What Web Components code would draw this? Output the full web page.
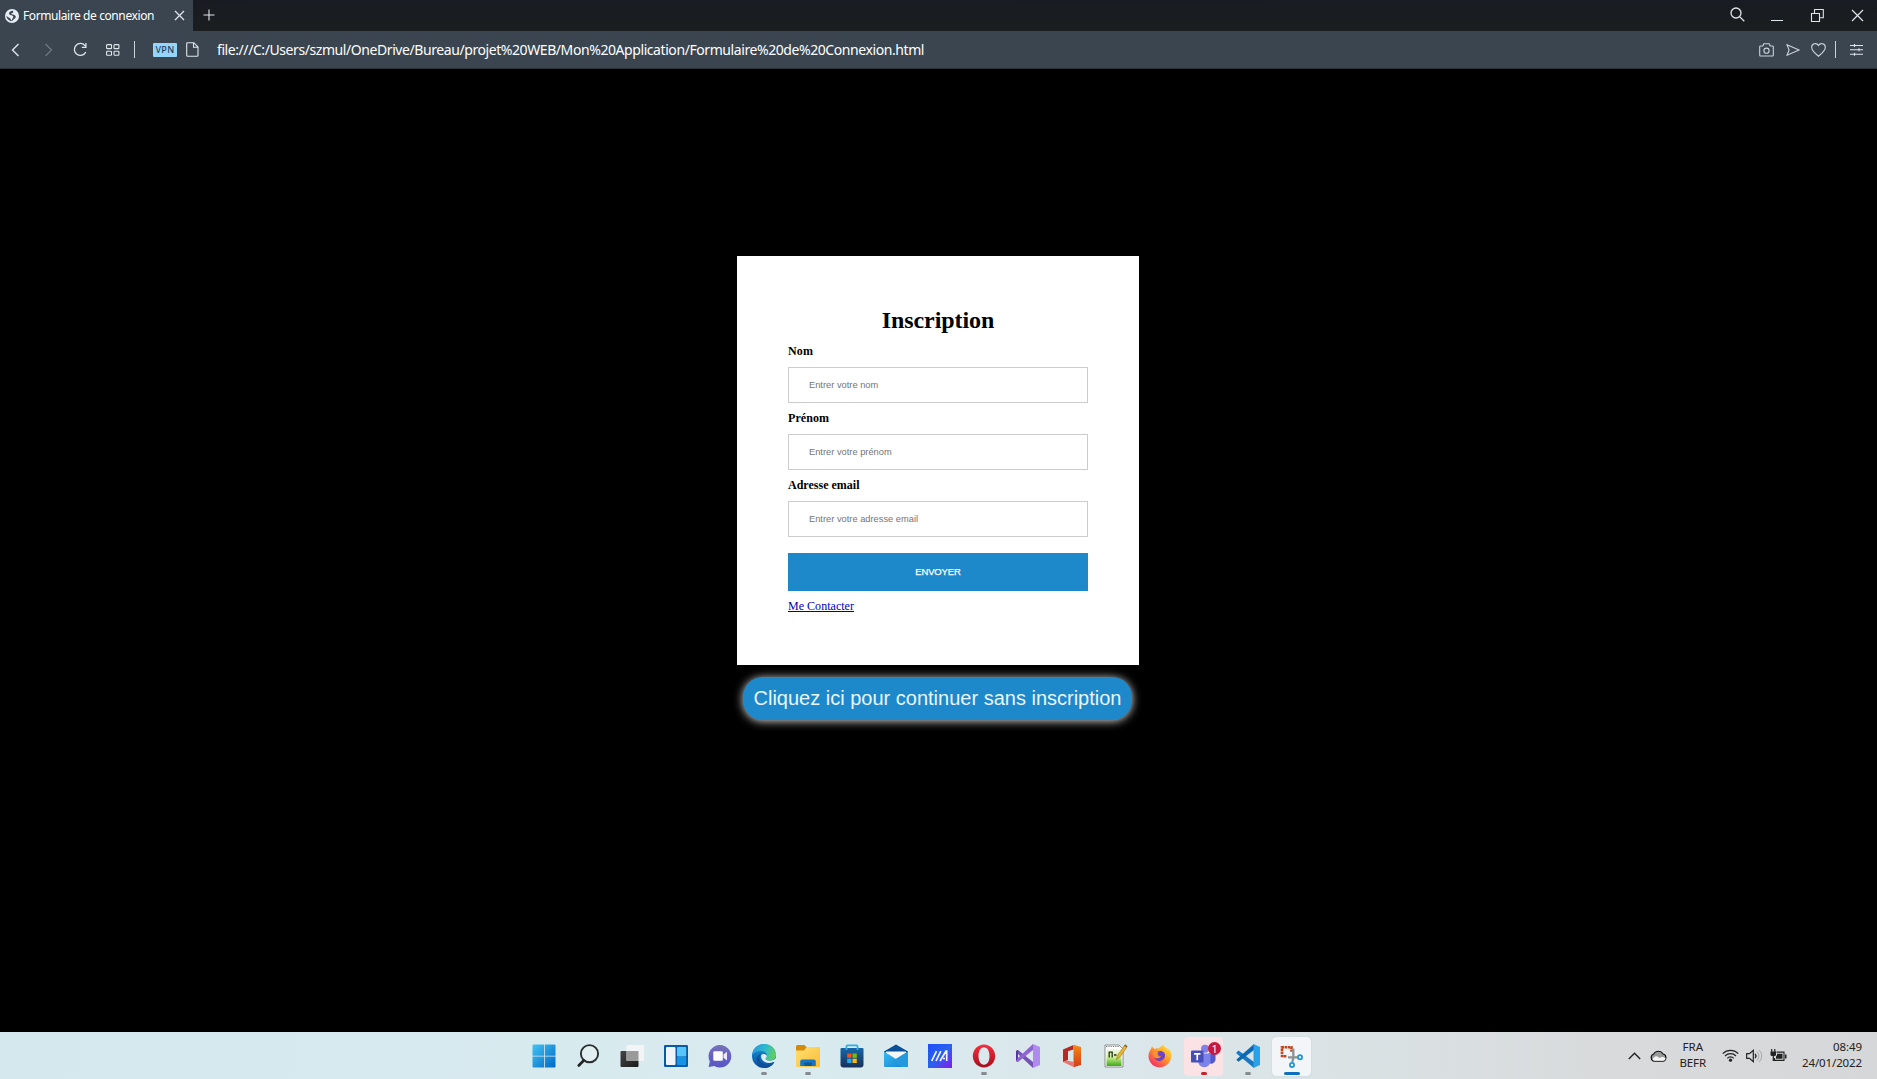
<!DOCTYPE html>
<html lang="fr">
<head>
<meta charset="utf-8">
<title>Formulaire de connexion</title>
<style>
html,body{margin:0;height:100%;overflow:hidden;background:#000}
</style>
</head>
<body>
<desktop-screen></desktop-screen>
<script>
const define = (name, html, ready) => customElements.define(name, class extends HTMLElement {
  constructor(){ super(); this.attachShadow({mode:'open'}); }
  connectedCallback(){
    this.shadowRoot.innerHTML = typeof html === 'function' ? html(this) : html;
    if (ready) ready(this);
  }
});

/* Text run tracked so that it occupies exactly the given width. */
define('fit-text', `<style>:host{display:inline-block;white-space:pre;flex:none}span{display:inline-block}:host([underline]) span{text-decoration:underline}</style><span><slot></slot></span>`, el => {
  const span = el.shadowRoot.querySelector('span');
  const want = parseFloat(el.getAttribute('width'));
  const n = el.textContent.length;
  const got = span.getBoundingClientRect().width;
  if (got && want) { span.style.letterSpacing = ((want - got) / n) + 'px'; }
});

const L = 'fill="none" stroke="#dfe6eb"';
const ICONS = {
  globe:`<svg width="14" height="14" viewBox="0 0 14 14"><circle cx="7" cy="7" r="7" fill="#e8eef4"/><path d="M8.200 1.800C6 1.500 3.800 3 4 4.800c.3 1.500 2.400 1.300 3.600 1.900 1 .6.900 1.500.1 2.300l-1 2.500C5.800 11 5.800 10 5 9.300 4 8.500 2.500 8 1.300 6.800c.3 2.500 2 4.700 4.700 5.400l1.700-.7C8.800 10 10.500 9.500 10.800 8c.1-1.200-1-1.700-2-2.200C8 5.300 7 5.500 6.200 4.700c.3-.9 1.700-.6 2-1.300z" fill="#3a4550"/></svg>`,
  close:`<svg width="11" height="11" viewBox="0 0 11 11"><path d="M1 1l9 9M10 1l-9 9" ${L} stroke-width="1.300"/></svg>`,
  plus:`<svg width="12" height="12" viewBox="0 0 12 12"><path d="M6 .5v11M.5 6h11" ${L} stroke-width="1.100"/></svg>`,
  back:`<svg width="9" height="14" viewBox="0 0 9 14"><path d="M7.500 1L1.500 7l6 6" ${L} stroke-width="1.400"/></svg>`,
  next:`<svg width="9" height="14" viewBox="0 0 9 14"><path d="M1.500 1l6 6-6 6" fill="none" stroke="#6b7680" stroke-width="1.400"/></svg>`,
  reload:`<svg width="15" height="15" viewBox="0 0 15 15"><path d="M12.300 4A6 6 0 1 0 12.800 10M12.900 1v4.300H8.800" ${L} stroke-width="1.300"/></svg>`,
  grid:`<svg width="14" height="12" viewBox="0 0 14 12"><g ${L} stroke-width="1.100"><rect x=".6" y=".6" width="4.900" height="4" rx=".7"/><rect x="8" y=".6" width="4.900" height="4" rx=".7"/><rect x=".6" y="7.200" width="4.900" height="4" rx=".7"/><rect x="8" y="7.200" width="4.900" height="4" rx=".7"/></g></svg>`,
  file:`<svg width="13" height="15" viewBox="0 0 13 15"><path d="M1.700.7h6.100L12 5v8.200a1 1 0 0 1-1 1H1.700a1 1 0 0 1-1-1V1.700a1 1 0 0 1 1-1zM7.500.9v4.400h4.400" ${L} stroke-width="1.100"/></svg>`,
  find:`<svg width="15" height="15" viewBox="0 0 15 15"><circle cx="6" cy="6" r="5" ${L} stroke-width="1.300"/><path d="M9.600 9.600l4.700 4.700" ${L} stroke-width="1.300"/></svg>`,
  min:`<svg width="12" height="12" viewBox="0 0 12 12"><path d="M0 11.500h12" ${L}/></svg>`,
  restore:`<svg width="13" height="13" viewBox="0 0 13 13"><path d="M.5 4.500h8v8h-8zM3.500 4V.5h8.800v8.300H9" ${L} stroke-width="1.100"/></svg>`,
  winclose:`<svg width="13" height="13" viewBox="0 0 13 13"><path d="M1 1l11 11M12 1L1 12" ${L} stroke-width="1.200"/></svg>`,
  camera:`<svg width="15" height="14" viewBox="0 0 15 14"><g fill="none" stroke="#cbd3da" stroke-width="1.100"><path d="M1.500 3h2.300l1-2.300h5.400l1 2.300h2.300a.8.8 0 0 1 .8.800v8.400a.8.8 0 0 1-.8.800h-12a.8.8 0 0 1-.8-.8V3.800a.8.8 0 0 1 .8-.8z"/><circle cx="7.500" cy="7.700" r="2.600"/></g></svg>`,
  send:`<svg width="14" height="12" viewBox="0 0 14 12"><path d="M1 .8L13 6 1 11.300 3.100 6z" fill="none" stroke="#cbd3da" stroke-width="1.100"/></svg>`,
  heart:`<svg width="15" height="14" viewBox="0 0 15 14"><path d="M7.500 13.200C3.500 10 .7 7.500.7 4.500A3.600 3.600 0 0 1 7.500 2.600 3.600 3.600 0 0 1 14.300 4.500c0 3-2.800 5.500-6.800 8.700z" fill="none" stroke="#cbd3da" stroke-width="1.100"/></svg>`,
  sliders:`<svg width="13" height="12" viewBox="0 0 13 12"><path d="M0 1.500h13M0 5.800h13M0 10.200h13M4.500 0v3M9 4.300v3M4.500 8.700v3" ${L} stroke-width="1.100"/></svg>`,

  start:`<svg width="24" height="24" viewBox="0 0 24 24"><defs><linearGradient id="g" x1="0" y1="0" x2="24" y2="24" gradientUnits="userSpaceOnUse"><stop stop-color="#43c6f5"/><stop offset="1" stop-color="#0066c5"/></linearGradient></defs><path d="M1.500.5H12v11.300H.5V1.500a1 1 0 0 1 1-1zM12.800.5h9.700a1 1 0 0 1 1 1v10.300H12.800zM.5 12.500H12v11H1.500a1 1 0 0 1-1-1zM12.800 12.500h10.700v10a1 1 0 0 1-1 1h-9.700z" fill="url(#g)"/></svg>`,
  search:`<svg width="24" height="24" viewBox="0 0 24 24"><circle cx="13.500" cy="9.700" r="8.600" fill="#e1eff3" stroke="#2a2c2e" stroke-width="1.900"/><path d="M7.800 16.400l-5 5.100" stroke="#222" stroke-width="2.700" stroke-linecap="round"/></svg>`,
  task:`<svg width="24" height="24" viewBox="0 0 24 24"><defs><linearGradient id="g" x1="0" y1="0" x2="1" y2="1"><stop stop-color="#444"/><stop offset="1" stop-color="#1b1b1b"/></linearGradient></defs><rect x=".5" y="7" width="18" height="16" rx="1" fill="url(#g)"/><rect x="6.500" y="1" width="17.500" height="16" rx="1" fill="#f4f4f4" opacity=".95"/><path d="M6.500 7h12v10h-12z" fill="#9a9a9a"/></svg>`,
  widgets:`<svg width="24" height="24" viewBox="0 0 24 24"><rect x="0" y="1" width="24" height="22" rx="1.300" fill="#075aa5"/><rect x="2" y="3" width="9.500" height="18" rx="1" fill="#f0f3f7"/><rect x="13" y="3" width="9.200" height="9.500" rx=".8" fill="#57c5f8"/><rect x="13" y="13" width="9.200" height="8" rx=".8" fill="#1594e3"/></svg>`,
  chat:`<svg width="24" height="24" viewBox="0 0 24 24"><defs><linearGradient id="g" x1="0" y1="0" x2="0" y2="1"><stop stop-color="#7572bb"/><stop offset="1" stop-color="#5854c7"/></linearGradient></defs><path d="M12 1a11.300 11.300 0 1 1-5.800 21L.6 23l1.200-5.500A11.300 11.300 0 0 1 12 1z" fill="url(#g)"/><rect x="5.300" y="7.300" width="9.500" height="9.500" rx="1.300" fill="#fff"/><path d="M15.500 10.500L19 7.800v8.700l-3.500-2.800z" fill="#eee9ff"/></svg>`,
  edge:`<svg width="24" height="24" viewBox="0 0 24 24"><defs><linearGradient id="g" x1="2" y1="3" x2="23" y2="10" gradientUnits="userSpaceOnUse"><stop stop-color="#279bdc"/><stop offset=".55" stop-color="#30bdc8"/><stop offset="1" stop-color="#62d05a"/></linearGradient><linearGradient id="h" x1="0" y1="0" x2="0" y2="1"><stop stop-color="#1995db"/><stop offset="1" stop-color="#0b4e9b"/></linearGradient></defs><circle cx="12" cy="12" r="12" fill="url(#h)"/><path d="M.1 11C.8 4.500 5.800 0 12 0c7 0 12 4.800 12 10.600 0 4-3 6.200-6.200 6.200-2.900 0-4.200-1.100-4.200-2 0-.8 1.300-1.300 1.300-3.100 0-2.700-2.500-4.700-5.900-4.700C5.200 7 2 8.500.1 11z" fill="url(#g)"/><path d="M8.700 9.800C5 15.700 10 22 17 20.800c2-.4 4-1.500 5.300-2.800C20.300 22 16.300 24 12.200 24 7 23 3.600 18.600 5 14c.6-2 2-3.500 3.700-4.200z" fill="#104f9a"/><path d="M9.300 11c-1.200 4 3 8.200 7.800 8 2.800-.1 4.500-1.200 5.500-1.200.7 0 .7.700.2 1.300 1-2 1.500-3.500 1.100-5-1.500 2-3.600 2.700-6.100 2.700-2.900 0-4.200-1.100-4.200-2 0-.8 1.300-1.300 1.300-3.100-2-2-4-2-5.600-.7z" fill="#dceef2"/></svg>`,
  folder:`<svg width="24" height="24" viewBox="0 0 24 24"><defs><linearGradient id="g" x1="0" y1="0" x2="1" y2="1"><stop stop-color="#ffdf72"/><stop offset="1" stop-color="#fbbd35"/></linearGradient></defs><path d="M1.500 1h6.800l2.200 2H23v5H0V2.500A1.500 1.500 0 0 1 1.500 1z" fill="#d48b0b"/><path d="M0 6.500h8L10.700 3H23a1 1 0 0 1 1 1v18a1 1 0 0 1-1 1H1a1 1 0 0 1-1-1z" fill="url(#g)"/><path d="M4.200 22v-4.500a2 2 0 0 1 2-2h11.600a2 2 0 0 1 2 2V22z" fill="#1676c4"/><path d="M8.300 18.500h7.500V22H8.300z" fill="#105895"/></svg>`,
  store:`<svg width="24" height="24" viewBox="0 0 24 24"><defs><linearGradient id="g" x1="0" y1="0" x2="0" y2="1"><stop stop-color="#1767a7"/><stop offset="1" stop-color="#17305a"/></linearGradient></defs><path d="M.5 5q0-1 1-1h21q1 0 1 1v15.500q0 3-3 3h-17q-3 0-3-3z" fill="url(#g)"/><path d="M6.500 6V2.500a1 1 0 0 1 1-1h9a1 1 0 0 1 1 1V6" fill="none" stroke="#2dafe3" stroke-width="1.900"/><path d="M7.500 4h9V2.500h-9z" fill="#d9ebf0"/><path d="M7.200 9.500h4.300v4.300H7.200z" fill="#f25022"/><path d="M12.500 9.500h4.300v4.300h-4.300z" fill="#7fba00"/><path d="M7.200 14.700h4.300V19H7.200z" fill="#28a8ea"/><path d="M12.500 14.700h4.300V19h-4.300z" fill="#ffb900"/></svg>`,
  mail:`<svg width="24" height="24" viewBox="0 0 24 24"><defs><linearGradient id="g" x1="0" y1="0" x2="1" y2="1"><stop stop-color="#38baf0"/><stop offset="1" stop-color="#1583d4"/></linearGradient></defs><path d="M0 7.500L12 .5l12 7v5H0z" fill="#0b4f98"/><path d="M2 8h20v8H2z" fill="#f5f7f8"/><path d="M0 7.500l12 7.500 12-7.500V22a1 1 0 0 1-1 1H1a1 1 0 0 1-1-1z" fill="url(#g)"/><path d="M24 7.500L8.500 17 18 23h5a1 1 0 0 0 1-1z" fill="#2499dd"/><path d="M2 7.500h20L12 14z" fill="#f5f7f8"/></svg>`,
  armoury:`<svg width="24" height="24" viewBox="0 0 24 24"><defs><linearGradient id="g" x1="0" y1="0" x2="1" y2="1"><stop stop-color="#204dfb"/><stop offset=".5" stop-color="#2863ef"/><stop offset="1" stop-color="#8a18f0"/></linearGradient></defs><path d="M0 0h24v24H0z" fill="url(#g)"/><path d="M3.700 17l4.800-9.800M8 17l4.800-9.800M12 17l6-9.800h.7V17M15 14.500h2" fill="none" stroke="#f2f2ff" stroke-width="1.700"/></svg>`,
  opera:`<svg width="24" height="24" viewBox="0 0 24 24"><defs><linearGradient id="g" x1="0" y1="0" x2="0" y2="1"><stop stop-color="#fa2d3c"/><stop offset="1" stop-color="#a50d1d"/></linearGradient></defs><path fill-rule="evenodd" d="M12 .5c6 0 11.200 5 11.200 11.500S18 23.500 12 23.500.8 18.500.8 12 6 .5 12 .5zM12 3.200c-3.500 0-5.500 4-5.500 8.800s2 8.800 5.500 8.800 5.500-4 5.500-8.800-2-8.800-5.500-8.800z" fill="url(#g)"/></svg>`,
  vs:`<svg width="24" height="24" viewBox="0 0 24 24"><path d="M0 7l2-1 15 12V24L2 10z" fill="#7652b5"/><path d="M0 7l2-1v12l-2-1z" fill="#5a379c"/><path d="M2 13.900L17 0v6L2 18l-2-1z" fill="#8e65d0"/><path d="M17 0l7 3v18l-7 3z" fill="#b18af0"/></svg>`,
  office:`<svg width="24" height="24" viewBox="0 0 24 24"><defs><linearGradient id="g" x1="0" y1="0" x2="0" y2="1"><stop stop-color="#f58a18"/><stop offset="1" stop-color="#d23b16"/></linearGradient></defs><path d="M3 5.500L13.500 1v4.500L8 7.300V16l-5 2z" fill="#b12a25"/><path d="M13.500.7L21 3v18l-7.500 2.300z" fill="url(#g)"/><path d="M3 18l4-1.500 7 1.500v5.300z" fill="#e77774"/></svg>`,
  npp:`<svg width="24" height="24" viewBox="0 0 24 24"><defs><linearGradient id="g" x1="0" y1="0" x2="0" y2="1"><stop stop-color="#f4f8ee"/><stop offset=".5" stop-color="#c7ed8b"/><stop offset="1" stop-color="#3da818"/></linearGradient></defs><path d="M1 1h14l4 4v18H1z" fill="#fff" stroke="#777" stroke-width=".8"/><path d="M2.500 5h15v17h-15z" fill="url(#g)"/><path d="M2 2.500h13" stroke="#888" stroke-dasharray="1.300 1"/><path d="M5.200 13.500V8.200h3v5.300M10 11h2.500M14 11h2" fill="none" stroke="#26331b" stroke-width="1.300"/><path d="M12.500 15.500l1-4L21 .8l2.300 1.600L15.500 13.500z" fill="#ecb82e" stroke="#97701d" stroke-width=".6"/><path d="M20.200 1.800L21 .6l2.300 1.700-.8 1.200z" fill="#935a42"/></svg>`,
  firefox:`<svg width="24" height="24" viewBox="0 0 24 24"><defs><linearGradient id="g" x1="20" y1="2" x2="4" y2="22" gradientUnits="userSpaceOnUse"><stop stop-color="#ffe13c"/><stop offset=".45" stop-color="#ff9628"/><stop offset="1" stop-color="#f5296b"/></linearGradient></defs><path d="M3 5l1-2.500L6.500 5c1.500-.7 3-.8 4.200-.4L15 .5c.6 2 4 3.500 5.500 5.500L21 4.500c3 4 3 9.500.5 13.500-4.500 7-14.500 7.300-19 .5C-.3 14-.1 9 3 5z" fill="url(#g)"/><path d="M8 9c1.500-2.300 6-3 8.200-.3 2.300 3-.2 8.300-5 8.200-3-.1-5.200-2.300-5-5.100 2 1 3.800.8 5-.8-1-.4-2.200-.7-3.200-2z" fill="#6b42cc"/><path d="M4.500 9c2-2.400 4.500-2.200 6-.2L8.500 11c1 1.300 2.500 1.700 4.500 1-.7 2-3.700 3.300-6.500 1.500z" fill="#ff922d"/></svg>`,
  vscode:`<svg width="24" height="24" viewBox="0 0 24 24"><path d="M.5 8.500l2-2L18 18v6L.5 9.500z" fill="#1a79c2"/><path d="M.5 15.500L18 0v6L2.500 17.700l-2-1.700z" fill="#0a69b2"/><path d="M17.500 0L24 3v18l-6.500 3z" fill="#29a2ec"/></svg>`,
  snip:`<svg width="24" height="24" viewBox="0 0 24 24"><path d="M2 13.300V3.200h9.500v4.600M3.500 12.200h3.500" fill="none" stroke="#c4451c" stroke-width="2.600" stroke-dasharray="2.600 .6"/><path d="M13.300 4.500V14l-1 4M8 13.300h9.500" fill="none" stroke="#8b9195" stroke-width="2.300"/><g fill="#dff4ff" stroke="#1a94d8" stroke-width="1.700"><circle cx="20" cy="13.300" r="2.100"/><circle cx="12" cy="21" r="2.100"/></g></svg>`,

  up:`<svg width="13" height="8" viewBox="0 0 13 8"><path d="M.8 7l5.700-5.700L12.200 7" fill="none" stroke="#222" stroke-width="1.400"/></svg>`,
  cloud:`<svg width="17" height="12" viewBox="0 0 17 12"><path d="M4.500 11.200A3.700 3.700 0 0 1 3.700 4a5.300 5.300 0 0 1 9.300 0 3.700 3.700 0 0 1 .2 7.200z" fill="#999" stroke="#111" stroke-width="1.100"/><path d="M2.500 10c1-3 3-4.300 5-3.400L9.500 8c2-1.500 4.500-1 6.200.5-.5 1.500-1.500 2.200-2.500 2.200H4.500z" fill="#f4f4f4"/></svg>`,
  wifi:`<svg width="17" height="13" viewBox="0 0 17 13"><g fill="none" stroke="#222" stroke-width="1.200"><path d="M.7 4.600a11 11 0 0 1 15.600 0M3 7a7.700 7.700 0 0 1 11 0M5.300 9.300a4.500 4.500 0 0 1 6.400 0"/></g><circle cx="8.500" cy="11.200" r="1.600" fill="#222"/></svg>`,
  sound:`<svg width="17" height="14" viewBox="0 0 17 14"><path d="M.7 4.700h2.800L7.300 1.300v11.400L3.500 9.300H.7z" fill="none" stroke="#222" stroke-width="1.200"/><path d="M9 4.900a3 3 0 0 1 0 4.200" fill="none" stroke="#222" stroke-width="1.200"/><path d="M11 2.700a6 6 0 0 1 0 8.600M13.200 1a8.500 8.500 0 0 1 0 12" fill="none" stroke="#aaa"/></svg>`,
  battery:`<svg width="17" height="13" viewBox="0 0 17 13"><path d="M6.500 3.100H14v8.300H4.500V9" fill="none" stroke="#222" stroke-width="1.100"/><path d="M7 4.700h5.500v5H6V7.500L7 6zM15 5.500h1.500v4H15z" fill="#222"/><path d="M.5 2.500h5.500v3q0 1.500-1.500 1.500H2Q.5 7 .5 5.500z" fill="#222"/><path d="M1.700 0v3M4.800 0v3M3.300 6v5.400h2" fill="none" stroke="#222" stroke-width="1.200"/></svg>`
};
ICONS.teams = `<svg width="26" height="24" viewBox="1 0 26 24"><circle cx="15" cy="4.800" r="4" fill="#7b83eb"/><circle cx="22" cy="6" r="3" fill="#5059c9"/><path d="M18 9.500h7.500v6.500a4.200 4.200 0 0 1-7.500 2z" fill="#5059c9"/><path d="M8 9.500h12.500v7.500a6.200 6.200 0 0 1-12.500 0z" fill="#7b83eb"/><rect x="1" y="6.500" width="12.500" height="12" rx="1" fill="#464eb8"/><path d="M4 9.800h6.500M7.250 9.800v6.500" stroke="#fff" stroke-width="1.700"/></svg>`;

define('ui-icon', el => `<style>:host{display:block;flex:none}svg{display:block;overflow:visible}</style>${ICONS[el.getAttribute('name')]}`);

define('tab-strip', `<style>
:host{display:flex;height:31px;background:linear-gradient(#181b21,#1b1e20);font:12px/31px "Noto Sans","Open Sans",sans-serif;color:#fff;align-items:center}
.tab{display:flex;align-items:center;width:193px;height:31px;background:#3a4550;box-sizing:border-box;padding:0 8px 0 5px}
.tab fit-text{margin:0 auto 0 4px}
.plus{margin-left:9.500px;margin-top:-2px}
.win{display:flex;margin-left:auto;align-items:center;padding-right:13px}
</style>
<div class="tab"><ui-icon name="globe"></ui-icon><fit-text width="131">Formulaire de connexion</fit-text><ui-icon name="close"></ui-icon></div>
<ui-icon class="plus" name="plus"></ui-icon>
<div class="win"><ui-icon name="find" style="margin:-3px 26px 0 0"></ui-icon><ui-icon name="min" style="margin:-2px 28px 0 0"></ui-icon><ui-icon name="restore" style="margin-right:27px"></ui-icon><ui-icon name="winclose"></ui-icon></div>`);

define('address-bar', `<style>
:host{display:flex;height:38px;background:#3a4550;align-items:center;color:#fff;font:14px/20px "Noto Sans","Open Sans",sans-serif;box-sizing:border-box;padding:0 14px 0 11px;border-bottom:1px solid #2c3439}
.sep{width:1px;height:17px;background:#cbd3da}
.vpn{display:flex;justify-content:center;width:24px;height:14px;border-radius:1px;background:#94d5fb;color:#1c4059;font:500 9px/14px "Noto Sans",sans-serif;margin:0 9px 0 18px}
.right{margin-left:auto;display:flex;align-items:center}
</style>
<ui-icon name="back" style="margin-right:24px"></ui-icon><ui-icon name="next" style="margin-right:20px"></ui-icon><ui-icon name="reload" style="margin-right:18px"></ui-icon><ui-icon name="grid" style="margin-right:14px"></ui-icon><span class="sep"></span>
<span class="vpn"><fit-text width="19">VPN</fit-text></span><ui-icon name="file" style="margin-right:18px"></ui-icon><fit-text width="707">file:///C:/Users/szmul/OneDrive/Bureau/projet%20WEB/Mon%20Application/Formulaire%20de%20Connexion.html</fit-text>
<div class="right"><ui-icon name="camera" style="margin-right:12px"></ui-icon><ui-icon name="send" style="margin-right:11px"></ui-icon><ui-icon name="heart" style="margin-right:9px"></ui-icon><span class="sep" style="margin-right:14px"></span><ui-icon name="sliders"></ui-icon></div>`);

define('form-field', el => `<style>
:host{display:block;margin-bottom:8px}
label{display:block;font-weight:bold;line-height:14px;margin-bottom:9px}
input{display:block;box-sizing:border-box;width:300px;height:36px;margin:0;padding:0 20px 1px;border:1px solid #ccc;background:#fff;font:9.300px "Liberation Sans",Arial,sans-serif;border-radius:0}
input::placeholder{color:#757575}
</style><label for="f"><fit-text width="${el.getAttribute('w')}">${el.getAttribute('label')}</fit-text></label><input id="f" placeholder="${el.getAttribute('hint')}">`);

define('sign-up-card', `<style>
:host{display:flex;flex-direction:column;box-sizing:border-box;width:402px;height:409px;padding:50px 51px 0;background:#fff;color:#000;font:12px/14px "Liberation Serif","Times New Roman",serif}
h1{margin:0 0 10px;font-size:24px;line-height:28px;text-align:center}
button{width:300px;height:38px;margin:8px 0;padding:0 0 2px;border:0;background:#1d88ca;color:#fff;font:9.500px "Liberation Sans",Arial,sans-serif;-webkit-text-stroke:.25px #fff}
a{color:#0000b8;align-self:flex-start}
</style>
<h1><fit-text width="112.500">Inscription</fit-text></h1>
<form-field label="Nom" hint="Entrer votre nom" w="25"></form-field>
<form-field label="Prénom" hint="Entrer votre prénom" w="41"></form-field>
<form-field label="Adresse email" hint="Entrer votre adresse email" w="71.500"></form-field>
<button><fit-text width="45.500">ENVOYER</fit-text></button>
<a href="#"><fit-text width="66" underline>Me Contacter</fit-text></a>`);

define('skip-button', `<style>
:host{display:block}
button{display:flex;align-items:center;justify-content:center;width:389px;height:43px;padding:0;border:0;border-radius:20px;background:#1d88ca;color:#eaf5fc;font:20px/23px "Liberation Sans",Arial,sans-serif;box-shadow:0 1px 10px rgba(255,255,255,.85)}
</style><button><fit-text width="368">Cliquez ici pour continuer sans inscription</fit-text></button>`);

define('page-view', `<style>
:host{display:flex;flex-direction:column;align-items:center;flex:1;background:#000;padding:187px 1px 0 0;box-sizing:border-box}
skip-button{margin:12px 1px 0 0}
</style><sign-up-card></sign-up-card><skip-button></skip-button>`);

define('task-item', el => {
  const s = el.getAttribute('state');
  return `<style>
:host{display:flex;justify-content:center;width:44.020px;height:47px;flex:none}
.tile{position:relative;display:flex;flex-direction:column;align-items:center;width:39px;height:39px;margin-top:5px;border-radius:4px;box-sizing:border-box;padding-top:7px}
.teams{background:#fbe3e5}.active{background:#f3f6f8;box-shadow:0 0 1px #aab4b8}
.bar{width:6px;height:3px;border-radius:2px;background:#858b8e;margin-top:4px}
.teams .bar{background:#c4212c}.active .bar{width:16px;background:#0f6fc1}
.badge{position:absolute;right:2px;top:5px;width:13px;height:13px;border-radius:50%;background:#c8193c;color:#fff;font:11px/13px "Noto Sans",sans-serif;text-align:center}
</style><div class="tile ${s||''}"><ui-icon name="${el.getAttribute('icon')}"></ui-icon>${s?'<span class="bar"></span>':''}${s==='teams'?'<span class="badge">1</span>':''}</div>`;
});

define('system-tray', `<style>
:host{display:flex;align-items:center;height:47px;color:#222;font:11.500px/16px "Noto Sans","Open Sans",sans-serif}
div{display:flex;flex-direction:column;padding-bottom:1px}
</style>
<ui-icon name="up" style="margin-right:9px"></ui-icon><ui-icon name="cloud" style="margin-right:13px"></ui-icon>
<div style="align-items:center;margin-right:16px"><fit-text width="20.500">FRA</fit-text><fit-text width="26.500">BEFR</fit-text></div>
<ui-icon name="wifi" style="margin-right:7px"></ui-icon><ui-icon name="sound" style="margin-right:7px"></ui-icon><ui-icon name="battery" style="margin-right:15px"></ui-icon>
<div style="align-items:flex-end"><fit-text width="29">08:49</fit-text><fit-text width="60">24/01/2022</fit-text></div>`);

const apps = [['start'],['search'],['task'],['widgets'],['chat'],['edge','open'],['folder','open'],['store'],['mail'],['armoury'],['opera','open'],['vs'],['office'],['npp'],['firefox'],['teams','teams'],['vscode','open'],['snip','active']];
define('task-bar', `<style>
:host{display:flex;height:47px;background:linear-gradient(90deg,#d4e8ee 0,#d9ebef 42%,#dbe5e8 66%,#d8dadb 86%,#d5d7d8 100%)}
nav{display:flex;margin-left:521.500px}
system-tray{margin:0 15px 0 auto}
</style><nav>${apps.map(([i,s])=>`<task-item icon="${i}"${s?` state="${s}"`:''}></task-item>`).join('')}</nav><system-tray></system-tray>`);

define('desktop-screen', `<style>:host{display:flex;flex-direction:column;width:1877px;height:1079px}</style>
<tab-strip></tab-strip><address-bar></address-bar><page-view></page-view><task-bar></task-bar>`);
</script>
</body>
</html>
